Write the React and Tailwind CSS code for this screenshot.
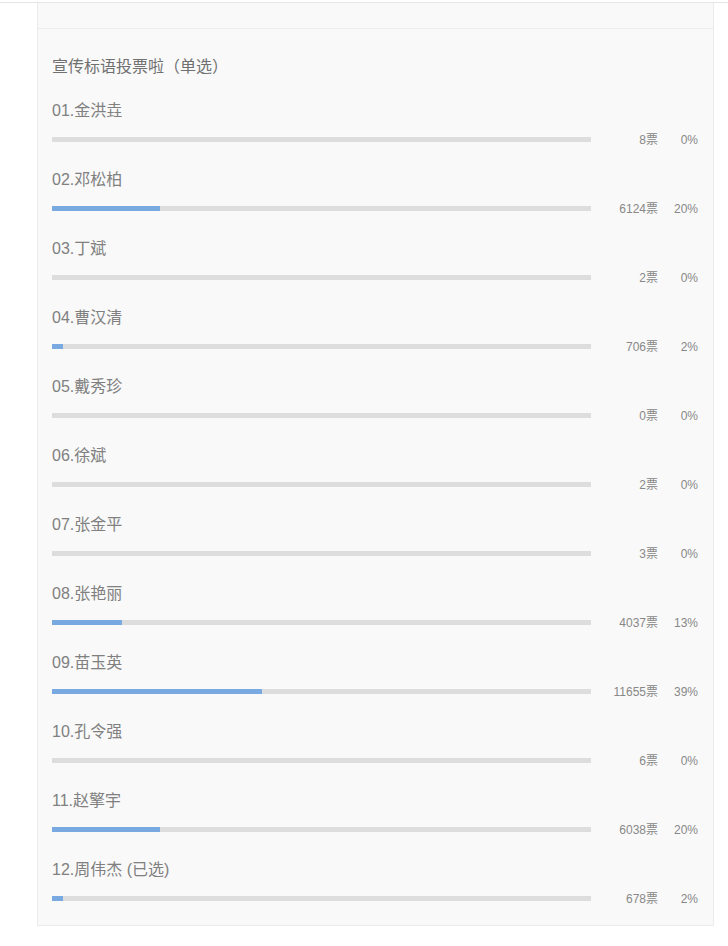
import React from 'react';

const items = [
  { name: '01.金洪垚', votes: 8, pct: 0 },
  { name: '02.邓松柏', votes: 6124, pct: 20 },
  { name: '03.丁斌', votes: 2, pct: 0 },
  { name: '04.曹汉清', votes: 706, pct: 2 },
  { name: '05.戴秀珍', votes: 0, pct: 0 },
  { name: '06.徐斌', votes: 2, pct: 0 },
  { name: '07.张金平', votes: 3, pct: 0 },
  { name: '08.张艳丽', votes: 4037, pct: 13 },
  { name: '09.苗玉英', votes: 11655, pct: 39 },
  { name: '10.孔令强', votes: 6, pct: 0 },
  { name: '11.赵擎宇', votes: 6038, pct: 20 },
  { name: '12.周伟杰 (已选)', votes: 678, pct: 2 },
];

const font = { fontFamily: '"Liberation Sans", Arial, "Noto Sans CJK SC", sans-serif' };

const VoteRow = ({ item, last }) => (
  <div className={last ? '' : 'mb-[21px]'}>
    <div className="h-[24px] leading-[24px] text-[16px] text-[#808080]">{item.name}</div>
    <div className="mt-[8px] flex h-[16px] items-center">
      <div className="h-[5px] w-[539px] bg-[#dddddd]">
        <div className="h-full bg-[#78a9e1]" style={{ width: `${item.pct}%` }} />
      </div>
      <div className="mt-[2px] w-[67px] text-right text-[12px] leading-[16px] text-[#888888]">{item.votes}票</div>
      <div className="mt-[2px] w-[40px] text-right text-[12px] leading-[16px] text-[#888888]">{item.pct}%</div>
    </div>
  </div>
);

export default function App() {
  return (
    <div className="min-h-[946px] bg-white" style={font}>
      <div className="h-[2px]" />
      <div className="h-px bg-[#e6e6e6]" />
      <div className="ml-[37px] w-[677px] border-x border-b border-[#ebebeb] bg-[#f9f9f9]">
        <div className="h-[26px] border-b border-[#ececec]" />
        <div className="pl-[14px] pr-[14px] pt-[26px] pb-[19px]">
          <div className="mb-[20px] h-[24px] leading-[24px] text-[16px] text-[#707070]">宣传标语投票啦（单选）</div>
          {items.map((it, i) => (
            <VoteRow key={it.name} item={it} last={i === items.length - 1} />
          ))}
        </div>
      </div>
    </div>
  );
}
